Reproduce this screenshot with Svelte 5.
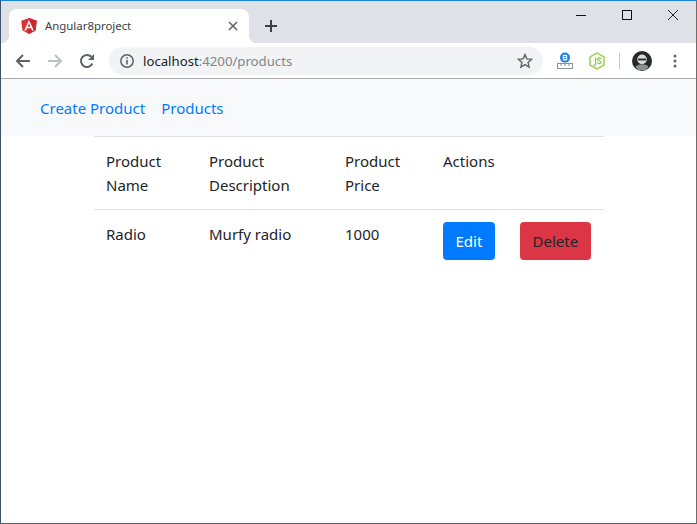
<script>
	const products = [{ name: 'Radio', description: 'Murfy radio', price: 1000 }];
</script>

<div class="window">
	<header class="tabstrip">
		<div class="tab">
			<svg class="favicon" viewBox="0 0 16 16" width="16" height="16">
				<path d="M8 0 .2 2.7l1.3 9.8L8 16l6.5-3.5 1.3-9.8z" fill="#dd3038" />
				<path d="M8 0v16l6.5-3.5 1.3-9.8z" fill="#c32a30" />
				<path d="M8 2 3.2 12.6h1.8l.95-2.4h4.1l.95 2.4h1.8zm1.4 6.75H6.6L8 5.3z" fill="#fff" />
			</svg>
			<span class="tab-title">Angular8project</span>
			<svg class="tab-close" viewBox="0 0 10 10" width="10" height="10">
				<path d="M1 1l8 8M9 1l-8 8" stroke="#5f6368" stroke-width="1.6" fill="none" />
			</svg>
		</div>
		<svg class="new-tab" viewBox="0 0 14 14" width="14" height="14">
			<path d="M7 1v12M1 7h12" stroke="#3c4043" stroke-width="2" fill="none" />
		</svg>
		<div class="window-controls">
			<svg viewBox="0 0 10 10" width="10" height="10"><path d="M0 5.5h10" stroke="#111" fill="none" /></svg>
			<svg viewBox="0 0 10 10" width="10" height="10"><rect x=".5" y=".5" width="9" height="9" stroke="#111" fill="none" /></svg>
			<svg viewBox="0 0 10 10" width="10" height="10"><path d="M0 0l10 10M10 0 0 10" stroke="#111" stroke-width=".9" fill="none" /></svg>
		</div>
	</header>

	<div class="toolbar">
		<svg class="tool" viewBox="0 0 16 16" width="16" height="16">
			<path d="M15 8H2M8 2 2 8l6 6" stroke="#5f6368" stroke-width="2" fill="none" />
		</svg>
		<svg class="tool" viewBox="0 0 16 16" width="16" height="16">
			<path d="M1 8h13M8 2l6 6-6 6" stroke="#bdc1c6" stroke-width="2" fill="none" />
		</svg>
		<svg class="tool" viewBox="0 0 16 16" width="16" height="16">
			<path d="M13.4 10.5A6 6 0 1 1 12.3 3.8" stroke="#5f6368" stroke-width="2" fill="none" />
			<path d="M15 1v6H9z" fill="#5f6368" />
		</svg>
		<div class="omnibox">
			<svg viewBox="0 0 16 16" width="16" height="16">
				<circle cx="8" cy="8" r="6.2" stroke="#5f6368" stroke-width="1.5" fill="none" />
				<path d="M8 7v4.4" stroke="#5f6368" stroke-width="1.6" />
				<path d="M8 4.2v1.6" stroke="#5f6368" stroke-width="1.6" />
			</svg>
			<span class="url"><span class="host">localhost</span>:4200/products</span>
			<svg class="star" viewBox="0 0 16 16" width="16" height="16">
				<path d="M8 1.6l1.9 4.3 4.7.45-3.55 3.1 1.05 4.6L8 11.65l-4.1 2.4 1.05-4.6L1.4 6.35l4.7-.45z" stroke="#5f6368" stroke-width="1.4" fill="none" />
			</svg>
		</div>
		<svg class="ext" viewBox="0 0 18 18" width="18" height="18">
			<circle cx="9" cy="5.6" r="5" fill="#1a7fe8" />
			<rect x="6.8" y="2.8" width="4.4" height="5.6" rx="1" fill="#fff" />
			<path d="M7.8 4.6h2.4M7.8 6.6h2.4" stroke="#1a7fe8" />
			<path d="M1 11.5h16M1 16.5h16M1.5 11.5v5M16.5 11.5v5M5 12v2M9 12v2M13 12v2" stroke="#8a9095" fill="none" />
		</svg>
		<svg class="ext" viewBox="0 0 18 18" width="18" height="18">
			<path d="M9 1l7 4v8l-7 4-7-4V5z" fill="#fbfdf7" stroke="#a5d46a" stroke-width="1.7" />
			<path d="M7.6 5.6v6.6c0 1.1-1.3 1.3-2.1.7M13 6.8c-.8-1.1-3.3-1-3.3.5 0 1.8 3.4 1 3.4 3 0 1.6-2.7 1.7-3.6.4" stroke="#8cc152" stroke-width="1.2" fill="none" />
		</svg>
		<span class="divider"></span>
		<svg class="avatar" viewBox="0 0 20 20" width="20" height="20">
			<circle cx="10" cy="10" r="10" fill="#26282a" />
			<circle cx="10" cy="8.4" r="4.8" fill="#d8dadb" />
			<path d="M6 7.6h8v1.8H6z" fill="#26282a" />
			<path d="M3.5 16c1.5-3.6 11.5-3.6 13 0l-3 3.2h-7z" fill="#8b8f91" />
		</svg>
		<svg class="menu" viewBox="0 0 4 14" width="4" height="14">
			<circle cx="2" cy="2" r="1.5" fill="#5f6368" />
			<circle cx="2" cy="7" r="1.5" fill="#5f6368" />
			<circle cx="2" cy="12" r="1.5" fill="#5f6368" />
		</svg>
	</div>

	<nav class="navbar">
		<a href="#create">Create Product</a>
		<a href="#products">Products</a>
	</nav>

	<main class="content">
		<table>
			<thead>
				<tr>
					<th class="c-name">Product<br />Name</th>
					<th class="c-desc">Product<br />Description</th>
					<th class="c-price">Product<br />Price</th>
					<th class="c-edit">Actions</th>
					<th></th>
				</tr>
			</thead>
			<tbody>
				{#each products as product}
					<tr>
						<td>{product.name}</td>
						<td>{product.description}</td>
						<td>{product.price}</td>
						<td><button type="button" class="btn btn-primary">Edit</button></td>
						<td><button type="button" class="btn btn-danger">Delete</button></td>
					</tr>
				{/each}
			</tbody>
		</table>
	</main>
</div>

<style>
	:global(body) {
		background: #fff;
	}
	.window {
		height: 524px;
		box-sizing: border-box;
		display: flex;
		flex-direction: column;
		border-top: 1px solid #1883d7;
		border-left: 1px solid #3f5368;
		border-right: 1px solid #6e6e6e;
		border-bottom: 1px solid #5c6064;
		font-family: 'Noto Sans', 'Open Sans', sans-serif;
		color: #212529;
		overflow: hidden;
	}
	.tabstrip {
		height: 42px;
		flex: none;
		display: flex;
		align-items: flex-end;
		padding-left: 8px;
		background: #dee1e6;
	}
	.tab {
		position: relative;
		width: 240px;
		height: 34px;
		box-sizing: border-box;
		display: flex;
		align-items: center;
		padding: 0 11px 0 12px;
		background: #fff;
		border-radius: 8px 8px 0 0;
	}
	.tab::before,
	.tab::after {
		content: '';
		position: absolute;
		bottom: 0;
		width: 8px;
		height: 8px;
	}
	.tab::before {
		left: -8px;
		background: radial-gradient(circle at 0 0, #dee1e6 8px, #fff 8.5px);
	}
	.tab::after {
		right: -8px;
		background: radial-gradient(circle at 100% 0, #dee1e6 8px, #fff 8.5px);
	}
	.favicon {
		flex: none;
	}
	.tab-title {
		flex: 1;
		margin: 0 0 2px 8px;
		font-size: 11.4px;
		color: #3c4043;
	}
	.new-tab {
		margin: 0 0 10px 15px;
	}
	.window-controls {
		margin-left: auto;
		align-self: flex-start;
		display: flex;
		gap: 36px;
		padding: 9px 18px 0 0;
	}
	.toolbar {
		height: 36px;
		flex: none;
		box-sizing: border-box;
		display: flex;
		align-items: center;
		padding-left: 14px;
		background: #fff;
		border-bottom: 1px solid #a9abad;
	}
	.tool {
		flex: none;
		margin-right: 16px;
	}
	.omnibox {
		width: 434px;
		height: 28px;
		box-sizing: border-box;
		margin-left: -2px;
		display: flex;
		align-items: center;
		padding: 0 10px;
		background: #f1f3f4;
		border-radius: 14px;
	}
	.url {
		flex: 1;
		margin-left: 8px;
		font-size: 13.2px;
		color: #80868b;
	}
	.host {
		color: #202124;
	}
	.ext {
		flex: none;
		margin-left: 13px;
	}
	.ext + .ext {
		margin-left: 14px;
	}
	.divider {
		width: 1px;
		height: 16px;
		margin: 0 12px 0 13px;
		background: #c8cacc;
	}
	.avatar {
		flex: none;
	}
	.menu {
		flex: none;
		margin-left: 21px;
	}
	.navbar {
		height: 57px;
		flex: none;
		box-sizing: border-box;
		display: flex;
		align-items: center;
		gap: 16px;
		padding-left: 39px;
		background: #f8f9fa;
		font-size: 15px;
	}
	.navbar a {
		color: #007bff;
		text-decoration: none;
	}
	.content {
		padding-left: 93px;
	}
	table {
		width: 510px;
		table-layout: fixed;
		border-collapse: collapse;
		font-size: 15px;
		line-height: 24px;
	}
	th,
	td {
		padding: 12px;
		border-top: 1px solid #dee2e6;
		text-align: left;
		vertical-align: top;
		font-weight: 400;
	}
	.c-name {
		width: 79px;
	}
	.c-desc {
		width: 112px;
	}
	.c-price {
		width: 74px;
	}
	.c-edit {
		width: 53px;
	}
	.btn {
		display: block;
		height: 38px;
		box-sizing: border-box;
		padding: 0 11.5px;
		border: 1px solid transparent;
		border-radius: 4px;
		font: inherit;
	}
	.btn-primary {
		color: #fff;
		background: #007bff;
	}
	.btn-danger {
		color: #212529;
		background: #dc3545;
	}
</style>
